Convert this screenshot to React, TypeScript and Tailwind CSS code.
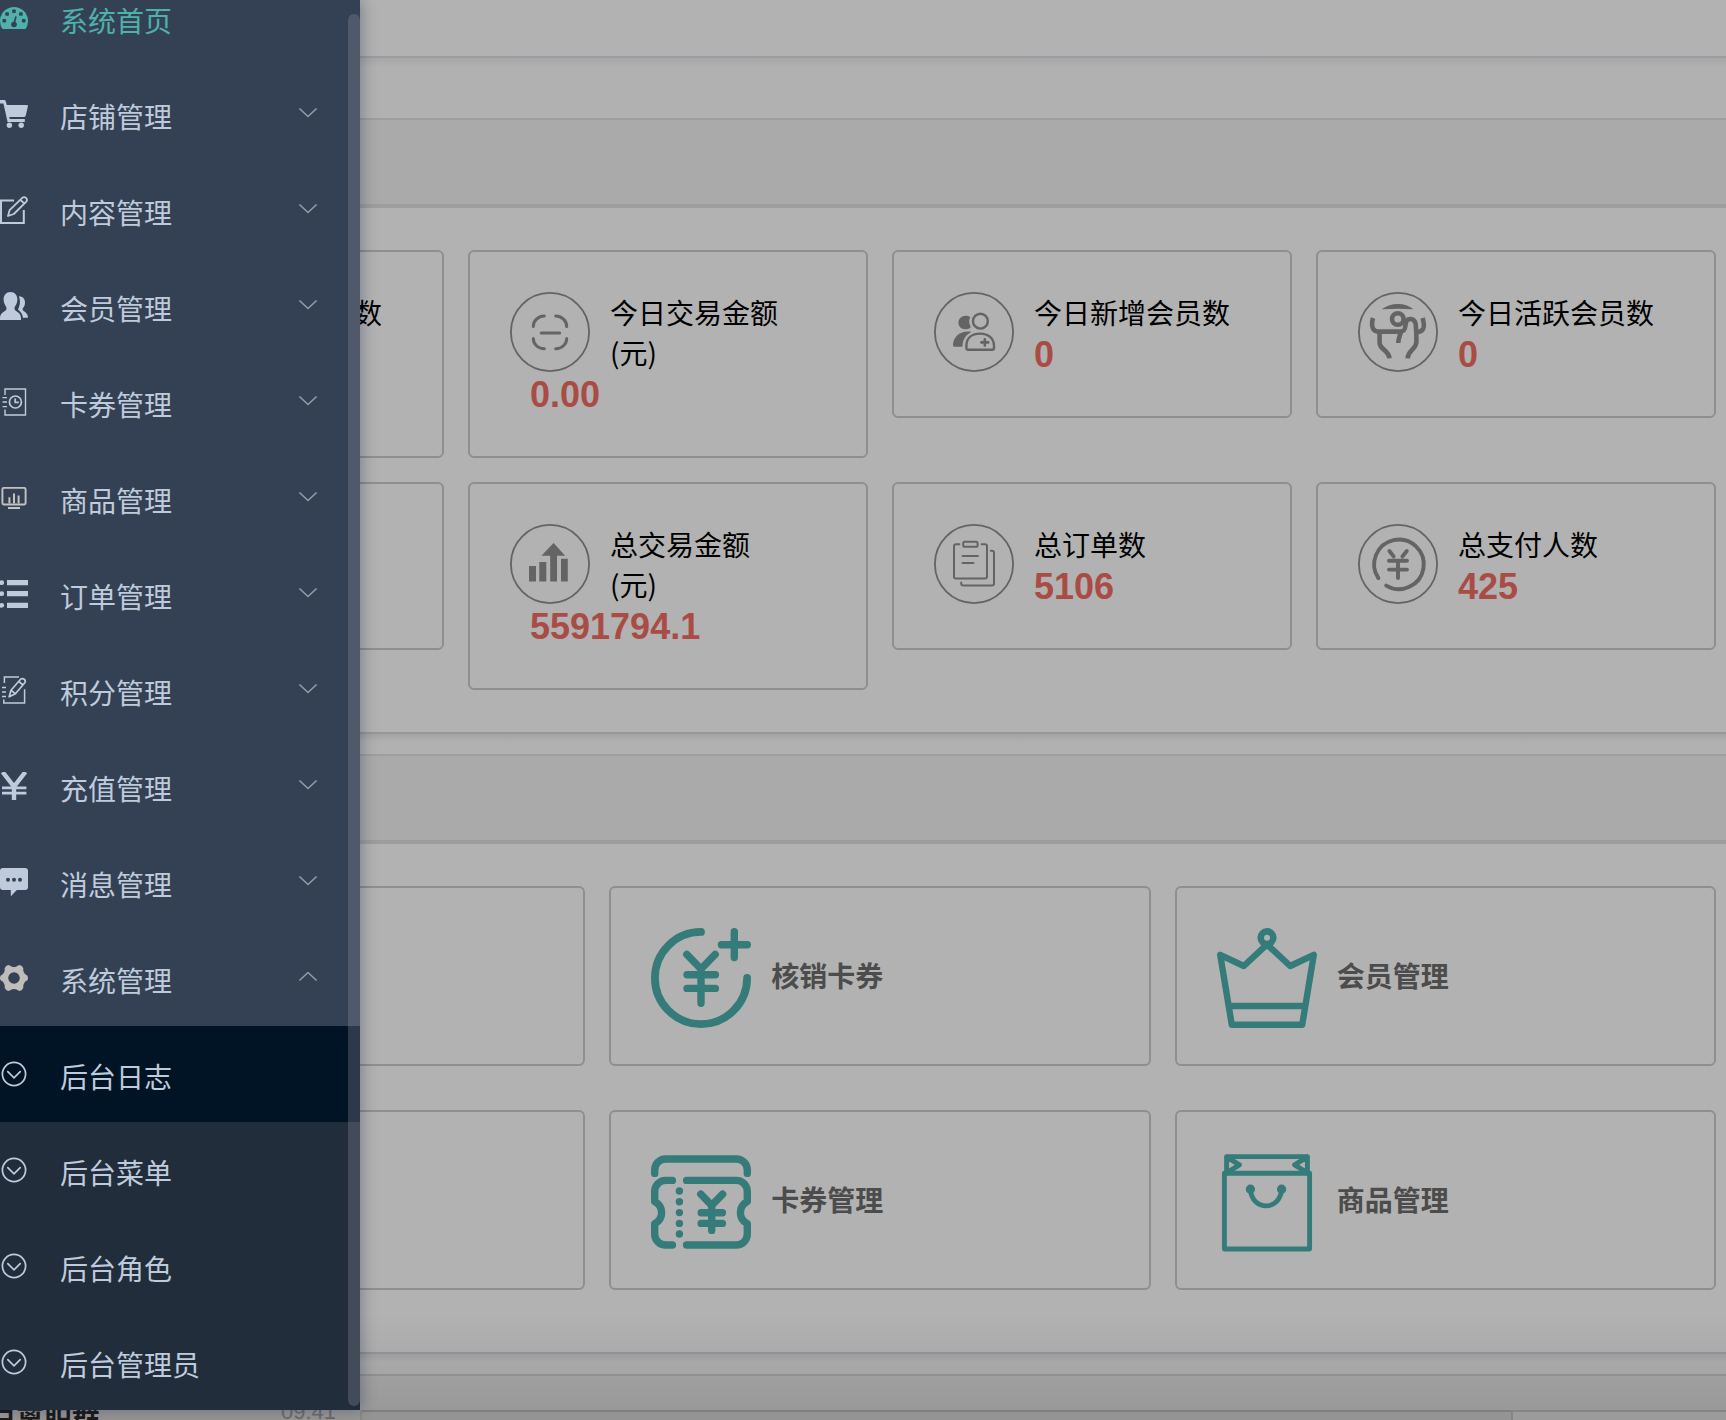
import type { ReactNode } from "react";

const CJK = "font-['Noto_Sans_CJK_SC',sans-serif]";

/* ---------- sidebar icons ---------- */

function Glyph({ children }: { children: ReactNode }) {
  return (
    <svg viewBox="0 0 28 28" className="h-7 w-7 shrink-0" fill="none" stroke="currentColor" strokeWidth="1.7" aria-hidden="true">
      {children}
    </svg>
  );
}

const solid = { fill: "currentColor", stroke: "none" };

const DashboardIcon = () => (
  <Glyph>
    <path {...solid} d="M2.5 25A14 14 0 1 1 25.5 25Z" />
    <g className="fill-[#344155]" stroke="none">
      <rect x="2.5" y="15" width="3.6" height="3.6" rx=".8" />
      <rect x="5.3" y="8.2" width="3.6" height="3.6" rx=".8" />
      <rect x="12.2" y="5.4" width="3.6" height="3.6" rx=".8" />
      <rect x="19.1" y="8.2" width="3.6" height="3.6" rx=".8" />
      <rect x="21.9" y="15" width="3.6" height="3.6" rx=".8" />
      <circle cx="14" cy="20.5" r="2.8" />
    </g>
    <path className="stroke-[#344155]" d="M14.2 19L16 12.5" />
  </Glyph>
);
const CartIcon = () => (
  <Glyph>
    <path {...solid} d="M0 0H4.2Q5.4 0 5.8 1.4L6.8 5H27Q28.2 5 27.9 6.2L25.8 15.6Q25.5 17 24 17H9.2L9.8 19H24.8V22H7.6L3.4 3.6H0Z" />
    <circle {...solid} cx="9.4" cy="25.3" r="2.7" />
    <circle {...solid} cx="21.2" cy="25.3" r="2.7" />
  </Glyph>
);
const EditIcon = () => (
  <Glyph>
    <path strokeWidth="2" d="M14 4.4H1V27H23.8V14" />
    <path strokeWidth="1.8" strokeLinejoin="round" d="M8 20L9.6 14.2L22.3 1.8Q24.2.4 26 1.9Q27.8 3.6 26.3 5.6L13.8 18ZM20.4 3.8L24.3 7.5" />
  </Glyph>
);
const UsersIcon = () => (
  <Glyph>
    <path {...solid} d="M10.5 0C14.8 0 17.4 3.3 17.4 7.6C17.4 11 16 13.3 14.6 15.2V17.2C15 19.6 21 20.2 21 26V28H0V26C0 20.2 6 19.6 6.4 17.2V15.2C5 13.3 3.6 11 3.6 7.6C3.6 3.3 6.2 0 10.5 0Z" />
    <path {...solid} d="M18.8 4.2C22.8 4.4 25 6.6 25 10.6C25 13.4 24 15 22.7 16.4V18C23.6 19.6 28 20.6 28 25.8H22.9C22.6 21.3 20 19.2 18 17.4C20 14 20.8 8.6 18.8 4.2Z" />
  </Glyph>
);
const CardIcon = () => (
  <Glyph>
    <path strokeWidth="1.4" d="M5 7V1H25.5V27H5V21.5M2.5 9.6H7M2.5 14H7M2.5 18.6H7" />
    <circle cx="15.4" cy="14" r="6" />
    <path d="M15.2 10.5V14.4H18.8" />
  </Glyph>
);
const GoodsIcon = () => (
  <Glyph>
    <g className="stroke-[#c3c2bf]">
      <rect x="2.4" y="3.9" width="23.2" height="16.6" rx="1.4" strokeWidth="1.9" />
      <path strokeWidth="2" d="M9.4 13.2V19.4M14 9.4V19.4M18.6 11.4V19.4M8 24H20" />
    </g>
  </Glyph>
);
const ListIcon = () => (
  <Glyph>
    <path strokeWidth="5.2" d="M7 2.7H28M7 13.7H28M7 25.3H28" />
    <circle {...solid} cx="1.7" cy="2.7" r="2.4" />
    <circle {...solid} cx="1.7" cy="13.7" r="2.4" />
    <circle {...solid} cx="1.7" cy="25.3" r="2.4" />
  </Glyph>
);
const PointsIcon = () => (
  <Glyph>
    <path strokeWidth="1.5" d="M4.4 7V1H19M2 11.6H6M2 16H6M2 20.6H6M3.8 23.4V27H24.6V13.2" />
    <path strokeLinejoin="round" d="M9.2 20.8L11 14.2L20.6 3.2Q22.4 1.8 24.4 3.4Q26 5 24.8 6.8L15.4 17.8ZM11 14.2L15.4 17.8M18.8 5.4L23 9" />
  </Glyph>
);
const RechargeIcon = () => (
  <Glyph>
    <path strokeWidth="4.4" d="M2.6 0L14 14.6L25.4 0M14 14V28" />
    <path strokeWidth="2.8" d="M2 15.8H26.4M2 21.2H26.4" />
  </Glyph>
);
const MessageIcon = () => (
  <Glyph>
    <path {...solid} d="M3 0H25Q28 0 28 3V19Q28 22 25 22H16.8L10.8 28.4V22H3Q0 22 0 19V3Q0 0 3 0Z" />
    <g className="fill-[#344155]" stroke="none">
      <circle cx="8" cy="11.8" r="2" />
      <circle cx="14" cy="11.8" r="2" />
      <circle cx="20" cy="11.8" r="2" />
    </g>
  </Glyph>
);
const GearIcon = () => (
  <Glyph>
    <path
      className="fill-[#bfbdba]"
      stroke="none"
      fillRule="evenodd"
      d="M8.2 1Q10 1.2 11.4 2.4Q14 3.4 16.6 2.4Q18 1.2 19.8 1Q22.6 1.8 23.4 4.4Q22.8 7 24.4 9.2Q25.4 10.8 27.2 11.4Q28.8 14 27.2 16.6Q25.4 17.2 24.4 18.8Q22.8 21 23.4 23.6Q22.6 26.2 19.8 27Q18 26.8 16.6 25.6Q14 24.6 11.4 25.6Q10 26.8 8.2 27Q5.4 26.2 4.6 23.6Q5.2 21 3.6 18.8Q2.6 17.2.8 16.6Q-.8 14 .8 11.4Q2.6 10.8 3.6 9.2Q5.2 7 4.6 4.4Q5.4 1.8 8.2 1ZM14 8.2A5.8 5.8 0 1 0 14 19.8A5.8 5.8 0 1 0 14 8.2Z"
    />
  </Glyph>
);
const CircleDownIcon = () => (
  <Glyph>
    <circle cx="14" cy="14" r="11.6" />
    <path d="M7.3 11.2L14 17.8L20.7 11.2" />
  </Glyph>
);

function Chevron({ up = false }: { up?: boolean }) {
  return (
    <svg viewBox="0 0 20 12" className="h-3 w-5 text-[#959aa5]" fill="none" stroke="currentColor" strokeWidth="1.5" aria-hidden="true">
      <path d={up ? "M1.4 8.5L10 0.5L18.6 8.5" : "M1.4 0.5L10 8.5L18.6 0.5"} />
    </svg>
  );
}

/* ---------- sidebar ---------- */

const menu = [
  { label: "店铺管理", Icon: CartIcon },
  { label: "内容管理", Icon: EditIcon },
  { label: "会员管理", Icon: UsersIcon },
  { label: "卡券管理", Icon: CardIcon },
  { label: "商品管理", Icon: GoodsIcon },
  { label: "订单管理", Icon: ListIcon },
  { label: "积分管理", Icon: PointsIcon },
  { label: "充值管理", Icon: RechargeIcon },
  { label: "消息管理", Icon: MessageIcon },
  { label: "系统管理", Icon: GearIcon, open: true },
];

const subMenu = ["后台日志", "后台菜单", "后台角色", "后台管理员"];

function Sidebar() {
  return (
    <aside className="relative z-10 w-[360px] shrink-0 bg-[#344155] text-[28px] leading-10 text-[#bfcbdb] shadow-[2px_0_14px_rgba(0,15,50,0.3)]">
      <nav>
        <a href="#home" className="flex h-[66px] items-center gap-8 pb-[30px] text-[#4fb0ac]">
          <DashboardIcon />
          <span className="pt-1">系统首页</span>
        </a>
        {menu.map(({ label, Icon, open }) => (
          <button key={label} type="button" aria-expanded={!!open} className="flex h-24 w-full items-center gap-8 pr-[42px] text-left">
            <Icon />
            <span className="flex-1 pt-1">{label}</span>
            <Chevron up={open} />
          </button>
        ))}
        <ul className="bg-[#222d3b]">
          {subMenu.map((label, i) => (
            <li key={label}>
              <a href={"#sub-" + i} className={i === 0 ? "flex h-24 items-center gap-8 bg-[#001426]" : "flex h-24 items-center gap-8"}>
                <CircleDownIcon />
                <span className="pt-1">{label}</span>
              </a>
            </li>
          ))}
        </ul>
      </nav>
      <div className="absolute top-3.5 right-0 bottom-1 w-3 rounded-full bg-[#909399]/30" />
    </aside>
  );
}

/* ---------- statistic icons ---------- */

function Ring({ children }: { children?: ReactNode }) {
  return (
    <svg viewBox="0 0 80 80" className="float-left mr-5 h-20 w-20 text-[#646464]" fill="none" stroke="currentColor" strokeLinecap="round" aria-hidden="true">
      <circle cx="40" cy="40" r="39.1" strokeWidth="1.8" />
      {children}
    </svg>
  );
}

const ScanIcon = (
  <g strokeWidth="3">
    <path d="M23.3 34.4A11 10.4 0 0 1 34.3 24M45.7 24A11 10.4 0 0 1 56.7 34.4M23.3 46.4A11 10.4 0 0 0 34.3 56.8M45.7 56.8A11 10.4 0 0 0 56.7 46.4" />
    <path d="M31.3 41H49.6" strokeWidth="3.2" />
  </g>
);
const ChartIcon = (
  <path fill="currentColor" stroke="none" d="M19 42H26V57.6H19ZM29.3 38H36.3V57.6H29.3ZM43.6 19L55.2 31.8H47V57.6H40.2V31.8H31.4ZM51 34.8H57.8V57.6H51Z" />
);
const NewMemberIcon = (
  <g>
    <path fill="currentColor" stroke="none" d="M34.5 24.2C29 22.6 24.4 26 24.4 30.8C24.4 35.2 28.6 38.2 33.4 37C37 36 37 35 36.4 34C34.8 31 34.8 28.4 36 25.8C36.4 24.8 36 24.4 34.5 24.2Z" />
    <circle cx="46.4" cy="29.2" r="7.4" strokeWidth="2.4" />
    <path fill="currentColor" stroke="none" d="M36 39.6C26.4 38.6 20 44.4 19 52C18.8 54 19.4 54.8 21 54.8H28.4C28.8 48 31 43.6 36.6 40.6Q37 39.8 36 39.6Z" />
    <path strokeWidth="2.4" d="M32.4 55V53.6C32.6 46 38 41.6 46.2 41.6C54.4 41.6 59.8 46.4 60 53.6V56Q60 57.8 58.2 57.8H34.2Q32.4 57.8 32.4 56Z" />
    <path strokeWidth="2.6" d="M47.4 50.4H54.2M50.8 47.2V53.6" />
  </g>
);
const ActiveMemberIcon = (
  <g>
    <path fill="currentColor" stroke="none" d="M23.6 17.2Q31 12 40 12Q49 12 55.4 17.2Q40 16.4 23.6 17.2Z" />
    <circle cx="39.8" cy="27" r="5.8" strokeWidth="4.6" />
    <g strokeWidth="4.6" strokeLinecap="butt">
      <path d="M15 26Q13 33 15.2 37Q16.8 39.6 21 39.6H42C48 39.6 47 35 47.6 32C48.6 24.6 56.4 26.4 57.6 31.6Q58.6 40 58.4 50C58 58 50 58 49.6 66.4" />
      <path d="M21.6 40V51C22 58 31 58 31.4 66.4M42.8 39.6C42.4 43.6 40.4 46 40.2 51" />
      <path d="M64.6 26Q67 34 64.8 37.4Q63 40 59.4 40" />
    </g>
  </g>
);
const OrdersIcon = (
  <g strokeWidth="2">
    <rect x="29.2" y="17.8" width="14.4" height="5" rx="1.6" />
    <path d="M25.4 20.2H22Q20 20.2 20 22.2V52.6Q20 54.6 22 54.6H51Q53 54.6 53 52.6V22.2Q53 20.2 51 20.2H47.6M28.6 32H44M28.6 39H39.4M56.8 26.8H58Q60 26.8 60 28.8V59.6Q60 61.6 58 61.6H29.2Q27.2 61.6 27.2 59.6V58.4" />
  </g>
);
const PayersIcon = (
  <g strokeWidth="3.9">
    <path d="M20.4 54.2A24.8 24.8 0 1 1 28.2 61.6" />
    <path d="M31.4 27L35.6 32.4M48.8 27L44.4 32.4M31 36.8H49M31 45.6H49M40 37V54" />
  </g>
);

/* ---------- shortcut icons ---------- */

function BigIcon({ children }: { children: ReactNode }) {
  return (
    <svg viewBox="0 0 100 100" className="h-[100px] w-[100px] shrink-0 text-[#357b7a]" fill="none" stroke="currentColor" strokeWidth="7.4" strokeLinecap="round" strokeLinejoin="round" aria-hidden="true">
      {children}
    </svg>
  );
}

const VerifyIcon = (
  <>
    <path strokeWidth="7.8" d="M50 3.9A46.1 46.1 0 1 0 96.1 50" />
    <path d="M70.4 16.7H96.3M83.3 3.7V29.6" />
    <path d="M35.8 26.4L50 41L64.2 26.4M36 46.7H64.4M36 60.4H64.4M50 41V75.2" />
  </>
);
const CrownIcon = (
  <>
    <circle cx="50" cy="9.7" r="6.3" strokeWidth="6.6" />
    <path strokeWidth="6.4" d="M3.2 26.8L26.8 38L50 16.4L73.2 38L96.8 26.8L85.2 96.8H14.8Z" />
    <path strokeWidth="6.4" strokeLinecap="butt" d="M13 78H87" />
  </>
);
const CouponIcon = (
  <>
    <path d="M3.7 21.4V18A11 11 0 0 1 14.7 7H85.3A11 11 0 0 1 96.3 18V21.4" />
    <path d="M21.4 28.4H14.7A11 11 0 0 0 3.7 39.4V49.6Q10.6 53.4 10.6 60.7Q10.6 68 3.7 71.8V82A11 11 0 0 0 14.7 93H21.4" />
    <path d="M35.6 28.4H85.3A11 11 0 0 1 96.3 39.4V49.6Q89.4 53.4 89.4 60.7Q89.4 68 96.3 71.8V82A11 11 0 0 1 85.3 93H35.6" />
    <path d="M28.4 39V39.01M28.4 49.8V49.81M28.4 60.6V60.61M28.4 71.4V71.41M28.4 82V82.01" />
    <path d="M49.8 42.2L60.7 53.4L71.6 42.2M50.2 60.7H71.4M50.2 71.4H71.4M60.7 53.4V78.4" />
  </>
);
const BagIcon = (
  <g strokeWidth="4.9">
    <rect x="7.4" y="21.2" width="85.2" height="75.8" />
    <path d="M9.6 21V4.6H90.4V21M9.6 4.8L22.4 12.8L9.6 20.8M90.4 4.8L77.6 12.8L90.4 20.8" />
    <path d="M33.4 37.4C35 59.4 63 59.4 64.6 37.4" />
    <circle cx="33.4" cy="37.2" r="2.2" />
    <circle cx="64.6" cy="37.2" r="2.2" />
  </g>
);

/* ---------- content ---------- */

type Stat = { label: string; unit?: string; value: string; icon: ReactNode };

const stats: Stat[][] = [
  [
    { label: "今日交易金额", unit: "(元)", value: "0.00", icon: ScanIcon },
    { label: "今日新增会员数", value: "0", icon: NewMemberIcon },
    { label: "今日活跃会员数", value: "0", icon: ActiveMemberIcon },
  ],
  [
    { label: "总交易金额", unit: "(元)", value: "5591794.1", icon: ChartIcon },
    { label: "总订单数", value: "5106", icon: OrdersIcon },
    { label: "总支付人数", value: "425", icon: PayersIcon },
  ],
];

const shortcuts = [
  [
    { label: "核销卡券", icon: VerifyIcon },
    { label: "会员管理", icon: CrownIcon },
  ],
  [
    { label: "卡券管理", icon: CouponIcon },
    { label: "商品管理", icon: BagIcon },
  ],
];

function StatCard({ label, unit, value, icon }: Stat) {
  return (
    <article className="rounded-md border-2 border-[#8f8f8f] px-10 pt-10 pb-[38px]">
      <Ring>{icon}</Ring>
      <div className="pl-5">
        <h3 className="text-[28px] leading-10 text-black">
          {label}
          {unit && <span className="block">{unit}</span>}
        </h3>
        <p className="font-['Liberation_Sans',sans-serif] text-4xl leading-[46px] font-bold text-[#a94c45]">{value}</p>
      </div>
    </article>
  );
}

function SectionBar() {
  return <div className="h-[90px] border-t-2 border-b-4 border-t-[#9e9e9f] border-b-[#9d9d9d] bg-[#aaaaaa]" />;
}

function Divider() {
  return <div className="h-[22px] border-t-2 border-[#979799] bg-linear-to-b from-[#a3a3a6] to-[#b1b1b2] to-40%" />;
}

function Content() {
  return (
    <main className="relative min-w-0 flex-1 overflow-hidden bg-[#b2b2b2]">
      <div className="h-14" />
      <div className="h-[62px] border-t-2 border-[#9c9c9e] bg-linear-to-b from-[#a7a7a9] to-[#b1b1b2] to-15%" />

      <section>
        <SectionBar />
        <div className="-ml-[316px] flex flex-col gap-6 py-[42px] pr-2.5">
          {stats.map((row, i) => (
            <div key={i} className="grid grid-cols-4 items-start gap-6">
              <article className={i === 0 ? "h-[208px] rounded-md border-2 border-[#8f8f8f] py-10 pr-[60px] text-right" : "h-[168px] rounded-md border-2 border-[#8f8f8f]"}>
                {i === 0 && <h3 className="text-[28px] leading-10 text-black">数</h3>}
              </article>
              {row.map((s) => (
                <StatCard key={s.label} {...s} />
              ))}
            </div>
          ))}
        </div>
      </section>
      <Divider />

      <section>
        <SectionBar />
        <div className="-ml-[316px] flex flex-col gap-11 pt-[42px] pr-2.5 pb-[62px]">
          {shortcuts.map((row, i) => (
            <div key={i} className="grid grid-cols-3 gap-6">
              <div className="h-[180px] rounded-md border-2 border-[#8f8f8f]" />
              {row.map(({ label, icon }) => (
                <a key={label} href={"#" + label} className="flex h-[180px] gap-5 rounded-md border-2 border-[#8f8f8f] p-10">
                  <BigIcon>{icon}</BigIcon>
                  <span className="text-[28px] leading-[94px] font-bold text-[#4c4c4c]">{label}</span>
                </a>
              ))}
            </div>
          ))}
        </div>
      </section>
      <Divider />
      <div className="h-9 border-t-2 border-[#9a9a9b] bg-[#aaaaaa]" />
      <div className="pointer-events-none absolute inset-x-0 bottom-0 h-24 bg-linear-to-b from-black/0 to-black/10" />
    </main>
  );
}

export default function App() {
  return (
    <div className={CJK + " overflow-hidden"}>
      <div className="flex">
        <Sidebar />
        <Content />
      </div>
      <footer className="flex h-2.5 overflow-hidden bg-[#979797]">
        <div className="flex w-[362px] shrink-0 justify-between border-r-2 border-[#8b8b8b] pr-6">
          <span className="-ml-3 text-[28px] leading-4 font-bold text-[#1c1c1c]">户离职群</span>
          <time className="font-['Liberation_Sans',sans-serif] text-[22px] leading-1 text-[#6c6c6c]">09:41</time>
        </div>
        <div className="flex-1 border-t-2 border-[#7f7f7f] bg-[#949494]" />
        <div className="w-[215px] border-t-2 border-l-2 border-[#858585] bg-[#9b9b9b]" />
      </footer>
    </div>
  );
}
